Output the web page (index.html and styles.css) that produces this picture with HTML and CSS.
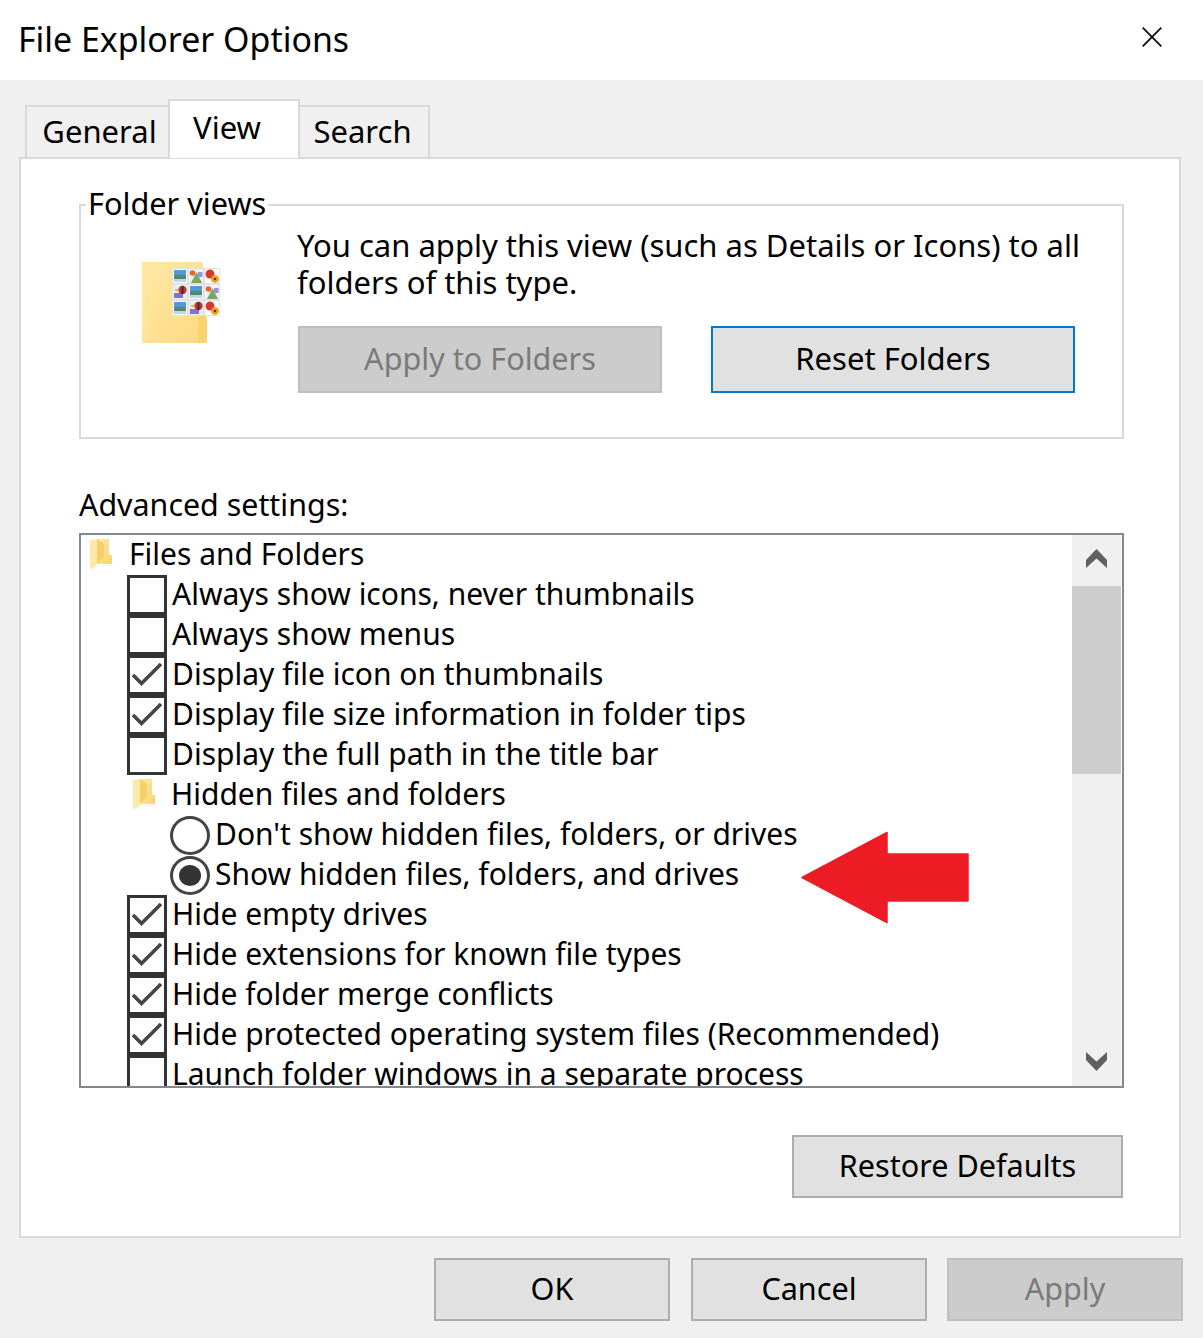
FILE: index.html
```html
<!DOCTYPE html>
<html lang="en">
<head>
<meta charset="utf-8">
<title>File Explorer Options</title>
<link rel="stylesheet" href="styles.css">
</head>
<body>
<svg class="defs" width="0" height="0" aria-hidden="true">
  <defs>
    <linearGradient id="fold" x1="0" y1="0" x2="1" y2="1"><stop offset="0" stop-color="#ffe9a6"/><stop offset="1" stop-color="#fbd36e"/></linearGradient>
    <linearGradient id="foldbig" x1="0" y1="0" x2="1" y2="1"><stop offset="0" stop-color="#ffe8a4"/><stop offset="1" stop-color="#fdda82"/></linearGradient>
    <symbol id="mini-folder" viewBox="0 0 25 34">
      <path d="M1 2 L8 1 V28 L1 32 Z" fill="#ffe9a8"/>
      <path d="M8 1 H20 V17 H23 V26 H8 Z" fill="#f5cf6c"/>
      <path d="M8 1 H20 V17 H23 V26 H8 L15 19 V6 Z" fill="url(#fold)"/>
      <path d="M1 32 L8 28 H24 V27 H7 L1 31 Z" fill="#fdf3d0"/>
    </symbol>
    <g id="thumb-lake"><rect width="14" height="14" fill="#fdfdfd"/><rect x="1" y="1" width="12" height="5" fill="#4f9bd6"/><rect x="1" y="6" width="12" height="4" fill="#5b8577"/><rect x="1" y="10" width="12" height="3" fill="#b9d9e8"/></g>
    <g id="thumb-hill"><rect width="14" height="14" fill="#eef4f8"/><path d="M2 14 L7.500 3 L13 14Z" fill="#79a860"/><circle cx="3.500" cy="4" r="2.800" fill="#e8642c"/><rect x="9" y="3" width="4.500" height="5" fill="#9a8fe0"/></g>
    <g id="thumb-flower"><rect width="14" height="14" fill="#fdfdfd"/><circle cx="5" cy="5" r="4.500" fill="#d23b2a"/><circle cx="10" cy="10" r="3.800" fill="#f0a020"/><circle cx="10" cy="10" r="1.300" fill="#5a3a10"/></g>
    <g id="thumb-balloon"><rect width="14" height="14" fill="#e8eef6"/><rect x="1" y="8" width="9" height="5" fill="#8a70c8"/><circle cx="9.500" cy="5" r="4.200" fill="#c8342a"/><rect x="8.500" y="1" width="2" height="8" fill="#27384a"/><rect x="2" y="4" width="3" height="2" fill="#e8c030"/></g>
  </defs>
</svg>
<main class="dialog">
  <header class="titlebar">
    <h1 class="title">File Explorer Options</h1>
    <svg class="close" width="20" height="20" viewBox="0 0 20 20" aria-label="Close"><path d="M0.700 0.700 L19.300 19.300 M19.300 0.700 L0.700 19.300" stroke="#111" stroke-width="1.900" fill="none"/></svg>
  </header>
  <div class="body">
    <nav class="tabs">
      <div class="tab tab-general">General</div>
      <div class="tab tab-view">View</div>
      <div class="tab tab-search">Search</div>
    </nav>
    <section class="panel">
      <div class="group">
        <div class="legend">Folder views</div>
        <div class="group-icon">
          <svg width="80" height="84" viewBox="0 0 80 84">
            <path d="M0 0 H59 Q61 0 61 2 V81 H0 Z" fill="url(#foldbig)"/>
            <path d="M0 0 H5 V81 H0 Z" fill="#ffe7a0" opacity=".7"/>
            <path d="M56 57 Q56 53 60 53 H62 Q65 53 65 57 V81 H56 Z" fill="#fbd36e"/>
            <g transform="translate(30,6)">
              <rect width="48" height="48" fill="#e2e2e2"/>
              <use href="#thumb-lake" x="1" y="1"/><use href="#thumb-hill" x="17" y="1"/><use href="#thumb-flower" x="33" y="1"/>
              <use href="#thumb-balloon" x="1" y="17"/><use href="#thumb-lake" x="17" y="17"/><use href="#thumb-hill" x="33" y="17"/>
              <use href="#thumb-lake" x="1" y="33"/><use href="#thumb-balloon" x="17" y="33"/><use href="#thumb-flower" x="33" y="33"/>
            </g>
          </svg>
        </div>
        <div class="group-main">
          <p class="group-text">You can apply this view (such as Details or Icons) to all folders of this type.</p>
          <div class="group-buttons">
            <div class="btn btn-wide btn-disabled">Apply to Folders</div>
            <div class="btn btn-wide btn-focus">Reset Folders</div>
          </div>
        </div>
      </div>
      <div class="adv-label">Advanced settings:</div>
      <div class="list">
        <div class="rows">
          <div class="row row-root"><svg class="mini mini-root"><use href="#mini-folder"/></svg><span>Files and Folders</span></div>
          <div class="row"><i class="box"></i><span>Always show icons, never thumbnails</span></div>
          <div class="row"><i class="box"></i><span>Always show menus</span></div>
          <div class="row"><i class="box"><svg class="tick" viewBox="0 0 34 34"><path d="M3 17 L11.500 25.500 L31 6"/></svg></i><span>Display file icon on thumbnails</span></div>
          <div class="row"><i class="box"><svg class="tick" viewBox="0 0 34 34"><path d="M3 17 L11.500 25.500 L31 6"/></svg></i><span>Display file size information in folder tips</span></div>
          <div class="row"><i class="box"></i><span>Display the full path in the title bar</span></div>
          <div class="row row-sub"><svg class="mini mini-sub"><use href="#mini-folder"/></svg><span>Hidden files and folders</span></div>
          <div class="row row-radio"><i class="radio"></i><span>Don't show hidden files, folders, or drives</span></div>
          <div class="row row-radio"><i class="radio radio-on"></i><span>Show hidden files, folders, and drives</span></div>
          <div class="row"><i class="box"><svg class="tick" viewBox="0 0 34 34"><path d="M3 17 L11.500 25.500 L31 6"/></svg></i><span>Hide empty drives</span></div>
          <div class="row"><i class="box"><svg class="tick" viewBox="0 0 34 34"><path d="M3 17 L11.500 25.500 L31 6"/></svg></i><span>Hide extensions for known file types</span></div>
          <div class="row"><i class="box"><svg class="tick" viewBox="0 0 34 34"><path d="M3 17 L11.500 25.500 L31 6"/></svg></i><span>Hide folder merge conflicts</span></div>
          <div class="row"><i class="box"><svg class="tick" viewBox="0 0 34 34"><path d="M3 17 L11.500 25.500 L31 6"/></svg></i><span>Hide protected operating system files (Recommended)</span></div>
          <div class="row"><i class="box"></i><span>Launch folder windows in a separate process</span></div>
        </div>
        <div class="scrollbar">
          <svg class="chev" width="21" height="19" viewBox="0 0 21 19"><path d="M10.500 0 L21 11 V19 L10.500 9.500 L0 19 V11 Z"/></svg>
          <div class="thumb"></div>
          <svg class="chev chev-down" width="21" height="19" viewBox="0 0 21 19"><path d="M10.500 19 L21 8 V0 L10.500 9.500 L0 0 V8 Z"/></svg>
        </div>
      </div>
      <div class="restore-row"><div class="btn btn-restore">Restore Defaults</div></div>
    </section>
    <footer class="actions">
      <div class="btn btn-action btn-ok">OK</div>
      <div class="btn btn-action">Cancel</div>
      <div class="btn btn-action btn-disabled">Apply</div>
    </footer>
  </div>
  <svg class="arrow" width="170" height="93" viewBox="0 0 170 93"><path d="M1 46.500 L86 1.500 V23 H167 V70 H86 V91.500 Z" fill="#ed1c24" stroke="#ed1c24" stroke-width="1.500" stroke-linejoin="round"/></svg>
</main>
</body>
</html>
```
FILE: styles.css
```css
* { box-sizing: border-box; }
html, body { margin: 0; padding: 0; }
body { background: #f0f0f0; font-family: "Noto Sans", "Open Sans", sans-serif; color: #000; font-size: 30px; }
.defs { position: absolute; }
.dialog { position: relative; width: 1203px; height: 1338px; background: #f0f0f0; overflow: hidden; }

.titlebar { height: 80px; background: #fff; display: flex; align-items: center; justify-content: space-between; padding: 0 41px 2px 18px; }
.title { margin: 0; font-size: 33.900px; font-weight: 400; line-height: 40px; }
.close { display: block; margin-bottom: 4px; }

.body { padding: 0 22px 0 19px; display: flex; flex-direction: column; }
.tabs { display: flex; align-items: flex-end; height: 77px; padding-left: 6px; position: relative; z-index: 1; font-size: 31px; }
.tab { background: #f0f0f0; border: 2px solid #d9d9d9; border-bottom: 0; height: 52px; display: flex; justify-content: center; padding-top: 4px; line-height: 40px; }
.tab-general { width: 144px; border-right: 0; padding-left: 3px; }
.tab-view { width: 132px; height: 59px; background: #fff; padding-top: 6px; margin-left: -1px; margin-bottom: -1px; padding-right: 14px; }
.tab-search { width: 130px; border-left: 0; padding-right: 3px; }

.panel { background: #fff; border: 2px solid #d9d9d9; width: 1162px; height: 1081px; padding: 45px 55px 0 58px; display: flex; flex-direction: column; }

.group { position: relative; height: 235px; border: 2px solid #d9d9d9; display: flex; padding: 21px 0 0 0; }
.legend { position: absolute; left: 5px; top: -20px; padding: 0 2px; background: #fff; line-height: 34px; font-size: 30.700px; }
.group-icon { width: 217px; padding: 35px 0 0 61px; flex: none; }
.group-icon svg { display: block; }
.group-main { flex: 1; }
.group-text { margin: 0 0 0 -1px; width: 800px; line-height: 37px; font-size: 31px; }
.group-buttons { display: flex; gap: 49px; margin-top: 25px; }

.btn { display: flex; align-items: center; justify-content: center; background: #e1e1e1; border: 2px solid #adadad; font-size: 30.600px; }
.btn-wide { width: 364px; height: 67px; padding-bottom: 4px; }
.btn-disabled { background: #ccc; border-color: #bfbfbf; color: #7a7a7a; }
.btn-focus { border-color: #0078d7; font-size: 31px; }

.adv-label { margin-top: 46px; line-height: 40px; height: 48px; font-size: 30.400px; }

.list { height: 555px; border: 2px solid #828790; background: #fff; display: flex; flex: none; }
.rows { flex: 1; height: 551px; overflow: hidden; }
.row { height: 40px; display: flex; align-items: center; padding-left: 46px; white-space: nowrap; line-height: 36px; }
.row > span { margin-left: 5px; margin-bottom: 2px; }
.row-root { padding-left: 8px; }
.row-root > span { margin-left: 15px; }
.row-sub { padding-left: 51px; }
.row-sub > span { margin-left: 14px; }
.row-radio { padding-left: 89px; }
.mini { width: 25px; height: 34px; flex: none; }
.box { width: 40px; height: 40px; border: 3px solid #333; background: #fff; display: block; flex: none; }
.tick { display: block; width: 34px; height: 34px; fill: none; stroke: #444; stroke-width: 3.600px; }
.radio { width: 40px; height: 39px; border: 3px solid #444; border-radius: 50%; display: block; flex: none; position: relative; background: #fff; }
.radio-on::after { content: ""; position: absolute; left: 6px; top: 6px; width: 22px; height: 21px; border-radius: 50%; background: #333; }

.scrollbar { width: 49px; margin-right: 1px; background: #f0f0f0; flex: none; display: flex; flex-direction: column; align-items: center; padding-top: 14px; }
.chev { fill: #606060; display: block; flex: none; }
.thumb { width: 49px; height: 188px; background: #cdcdcd; margin-top: 18px; }
.chev-down { margin-top: 278px; }

.restore-row { display: flex; justify-content: flex-end; margin-top: 47px; margin-right: 1px; }
.btn-restore { width: 331px; height: 63px; padding-bottom: 4px; }

.actions { display: flex; justify-content: flex-end; gap: 20px; margin-top: 20px; margin-right: -2px; }
.btn-action { width: 236px; height: 63px; padding-bottom: 4px; }
.btn-ok { margin-right: 1px; }

.arrow { position: absolute; left: 801px; top: 831px; }
```
